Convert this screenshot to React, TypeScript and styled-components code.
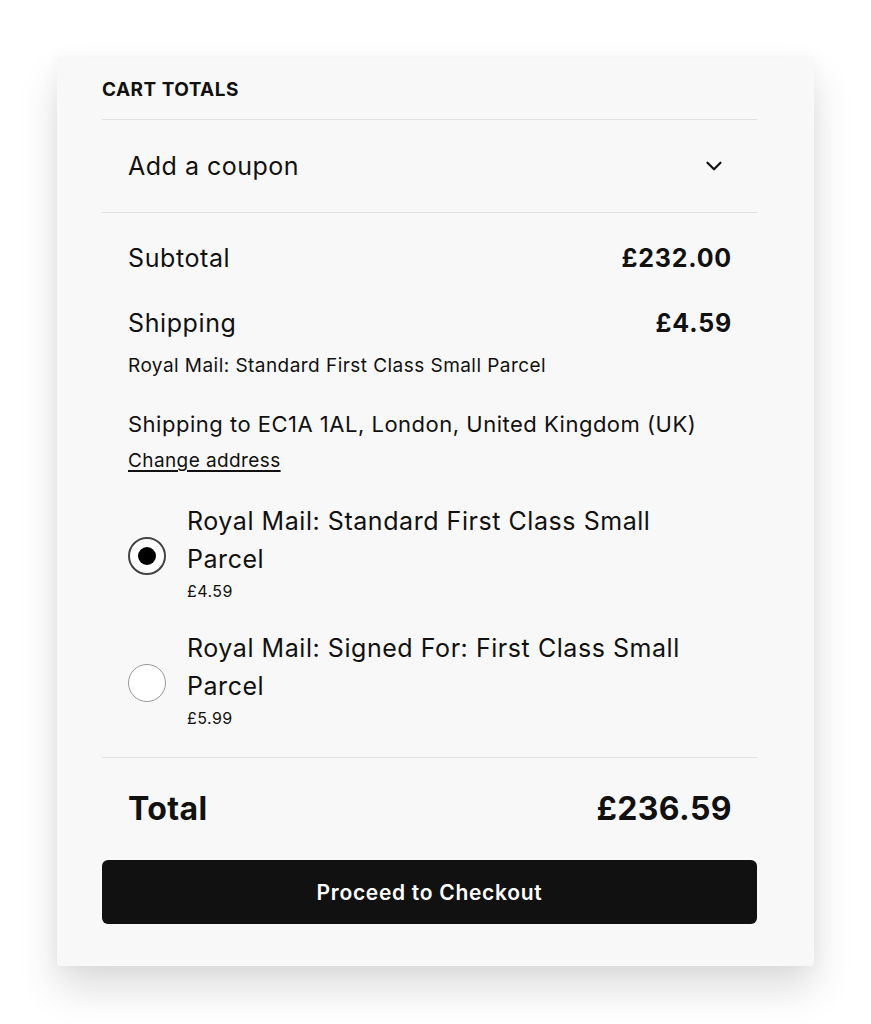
import React from 'react';
import styled, {createGlobalStyle} from 'styled-components';
import {ChevronDown} from 'lucide-react';

type ShippingOption = {
  id: string;
  label: string;
  price: string;
  selected: boolean;
};

const options: ShippingOption[] = [
  {id: 'standard', label: 'Royal Mail: Standard First Class Small Parcel', price: '£4.59', selected: true},
  {id: 'signed', label: 'Royal Mail: Signed For: First Class Small Parcel', price: '£5.99', selected: false},
];

const App = () => {
  return (
    <Page>
      <GlobalStyle />
      <Card>
        <Header>Cart totals</Header>
        <CouponRow>
          <CouponText>Add a coupon</CouponText>
          <ChevronDown size={26} strokeWidth={2} color="#111" />
        </CouponRow>
        <Totals>
          <Row>
            <Label>Subtotal</Label>
            <Amount>£232.00</Amount>
          </Row>
          <Row $top={33}>
            <Label>Shipping</Label>
            <Amount>£4.59</Amount>
          </Row>
          <Method>Royal Mail: Standard First Class Small Parcel</Method>
          <Destination>Shipping to EC1A 1AL, London, United Kingdom (UK)</Destination>
          <ChangeLink href="#">Change address</ChangeLink>
          <OptionList>
            {options.map(o => (
              <Option key={o.id}>
                <Radio $checked={o.selected} />
                <OptionBody>
                  <OptionLabel>{o.label}</OptionLabel>
                  <OptionPrice>{o.price}</OptionPrice>
                </OptionBody>
              </Option>
            ))}
          </OptionList>
        </Totals>
        <TotalRow>
          <TotalText>Total</TotalText>
          <TotalText>£236.59</TotalText>
        </TotalRow>
        <CheckoutButton>Proceed to Checkout</CheckoutButton>
      </Card>
    </Page>
  );
};

export default App;

const GlobalStyle = createGlobalStyle`
  body {
    margin: 0;
    background: #fff;
    font-family: Inter, 'Noto Sans', sans-serif;
    color: #111;
  }
`;

const Page = styled.div`
  padding: 58px 0 60px 57px;
`;

const Card = styled.div`
  width: 757px;
  box-sizing: border-box;
  padding: 0 57px 42px 45px;
  background: #f8f8f8;
  border-radius: 4px;
  box-shadow: 0 22px 40px rgba(0, 0, 0, 0.14), 0 0 18px rgba(0, 0, 0, 0.04);
`;

const Header = styled.div`
  padding: 20px 0 17px;
  font-size: 19px;
  line-height: 24px;
  font-weight: 700;
  letter-spacing: 0.45px;
  text-transform: uppercase;
  border-bottom: 1.5px solid #e2e2e2;
`;

const CouponRow = styled.div`
  height: 92px;
  display: flex;
  align-items: center;
  justify-content: space-between;
  padding: 0 30px 0 26px;
  border-bottom: 1.5px solid #e2e2e2;
`;

const CouponText = styled.span`
  font-size: 25px;
  letter-spacing: 0.5px;
`;

const Totals = styled.div`
  padding: 29px 25px 29px 26px;
  display: flex;
  flex-direction: column;
  border-bottom: 1.5px solid #e2e2e2;
`;

const Row = styled.div<{$top?: number}>`
  display: flex;
  justify-content: space-between;
  align-items: center;
  line-height: 32px;
  margin-top: ${p => p.$top ?? 0}px;
`;

const Label = styled.span`
  font-size: 25px;
  letter-spacing: 0.6px;
`;

const Amount = styled.span`
  font-size: 25px;
  font-weight: 700;
  letter-spacing: 0.8px;
`;

const Method = styled.div`
  margin-top: 15px;
  font-size: 19px;
  line-height: 24px;
  letter-spacing: 0.45px;
`;

const Destination = styled.div`
  margin-top: 32px;
  font-size: 22px;
  line-height: 28px;
  letter-spacing: 0.5px;
`;

const ChangeLink = styled.a`
  margin-top: 10px;
  align-self: flex-start;
  font-size: 19px;
  line-height: 26px;
  letter-spacing: 0.4px;
  color: #111;
  text-decoration: underline;
  text-underline-offset: 3px;
  text-decoration-thickness: 1.5px;
`;

const OptionList = styled.div`
  display: flex;
  flex-direction: column;
  gap: 28px;
  margin-top: 28px;
`;

const Option = styled.div`
  display: flex;
  align-items: center;
  gap: 21px;
`;

const Radio = styled.span<{$checked: boolean}>`
  flex: none;
  width: 38px;
  height: 38px;
  margin-top: 8px;
  box-sizing: border-box;
  border-radius: 50%;
  background: #fff;
  border: ${p => (p.$checked ? '2px solid #444' : '1.5px solid #999')};
  display: flex;
  align-items: center;
  justify-content: center;
  &::after {
    content: '';
    display: ${p => (p.$checked ? 'block' : 'none')};
    width: 18px;
    height: 18px;
    border-radius: 50%;
    background: #000;
  }
`;

const OptionBody = styled.div`
  display: flex;
  flex-direction: column;
  max-width: 520px;
`;

const OptionLabel = styled.span`
  font-size: 25px;
  line-height: 38px;
  letter-spacing: 0.55px;
`;

const OptionPrice = styled.span`
  font-size: 16px;
  line-height: 20px;
  letter-spacing: 0.45px;
  margin-top: 3px;
`;

const TotalRow = styled.div`
  display: flex;
  justify-content: space-between;
  align-items: center;
  padding: 31px 25px 0 26px;
`;

const TotalText = styled.span`
  font-size: 32px;
  line-height: 40px;
  font-weight: 700;
  letter-spacing: 0.4px;
`;

const CheckoutButton = styled.button`
  display: block;
  width: 100%;
  height: 64px;
  margin-top: 31px;
  border: none;
  border-radius: 6px;
  background: #111;
  color: #fff;
  font-family: inherit;
  font-size: 21px;
  font-weight: 600;
  letter-spacing: 0.7px;
  cursor: pointer;
`;
